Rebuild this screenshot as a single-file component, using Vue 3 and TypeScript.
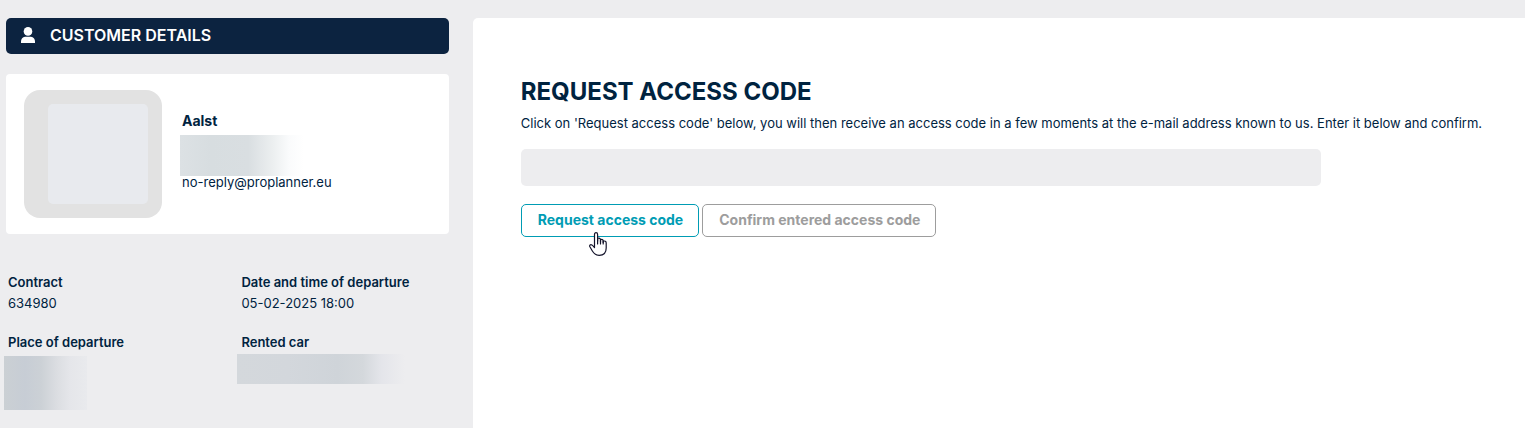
<script setup lang="ts">
import { ref } from 'vue'

interface Detail {
  label: string
  value?: string
  mask?: string
}

const accessCode = ref('')

const details: Detail[] = [
  { label: 'Contract', value: '634980' },
  { label: 'Date and time of departure', value: '05-02-2025 18:00' },
  { label: 'Place of departure', mask: 'mask-place' },
  { label: 'Rented car', mask: 'mask-car' },
]
</script>

<template>
  <div class="page">
    <aside class="sidebar">
      <h2 class="bar">
        <svg class="user" viewBox="0 0 14 16" aria-hidden="true">
          <ellipse cx="7" cy="4.400" rx="4.300" ry="4.400" />
          <path d="M0 16v-1.500C0 11.700 1.600 10 4 9.700h6c2.400.3 4 2 4 4.800V16z" />
        </svg>
        <span>CUSTOMER DETAILS</span>
      </h2>

      <section class="card">
        <div class="avatar"><div class="picture"></div></div>
        <div class="contact">
          <strong class="name">Aalst</strong>
          <div class="mask-address"></div>
          <span class="mail">no-reply@proplanner.eu</span>
        </div>
      </section>

      <dl class="details">
        <div v-for="item in details" :key="item.label" class="detail">
          <dt>{{ item.label }}</dt>
          <dd v-if="item.value">{{ item.value }}</dd>
          <dd v-else :class="item.mask"></dd>
        </div>
      </dl>
    </aside>

    <main class="content">
      <h1>REQUEST ACCESS CODE</h1>
      <label for="access-code">Click on 'Request access code' below, you will then receive an access code in a few moments at the e-mail address known to us. Enter it below and confirm.</label>
      <input id="access-code" v-model="accessCode" class="code" type="text" />
      <div class="actions">
        <button type="button" class="btn primary">
          Request access code
          <svg class="pointer" viewBox="0 0 18 24" aria-hidden="true">
            <path d="M5.500 14V2.500C5.500 1.300 6.200.7 7 .7s1.600.6 1.600 1.800V9V6.500c1.500-.6 2.900-.2 2.900 1.200V10 7.700c1.400-.6 2.700-.1 2.700 1.200v1.600-1.300c1.700-.5 3 .1 3 1.700V16c0 4.500-2.600 7.300-7 7.300-3.600 0-5.300-1.800-7-4.600L.9 14.800c-.8-1.500.6-2.700 2-1.900.9.500 1.700 1.600 2.600 2.600z" />
            <path d="M8.600 7v5M11.500 8v4M14.200 9v3" />
          </svg>
        </button>
        <button type="button" class="btn" disabled>Confirm entered access code</button>
      </div>
    </main>
  </div>
</template>

<style>
body {
  margin: 0;
  background: #ededef;
}
</style>

<style scoped>
.page {
  box-sizing: border-box;
  display: grid;
  grid-template-columns: 31% 1fr;
  min-height: 100vh;
  padding-top: 18px;
  background: #ededef;
  color: #00233f;
  font: 13px/20px Inter, "Open Sans", sans-serif;
}

.sidebar {
  padding: 0 24px 0 6px;
}

.bar {
  display: flex;
  align-items: center;
  gap: 15px;
  margin: 0 0 20px;
  padding: 8px 15px 10px;
  border-radius: 5px;
  background: #0c2340;
  color: #fff;
  font-size: 16px;
  font-weight: 600;
  line-height: 18px;
}

.user {
  width: 14px;
  height: 16px;
  fill: #fff;
}

.card {
  display: flex;
  align-items: flex-start;
  gap: 18px;
  padding: 16px 18px;
  border-radius: 4px;
  background: #fff;
}

.avatar {
  padding: 14px 14px 14px 24px;
  border-radius: 16px;
  background: #e2e2e2;
}

.picture {
  width: 100px;
  height: 100px;
  border-radius: 5px;
  background: #e8eaee;
}

.contact {
  display: flex;
  flex-direction: column;
  padding-top: 21px;
}

.name {
  padding: 0 2px;
  margin-bottom: 4px;
  font-size: 14px;
  font-weight: 700;
}

.mail {
  padding: 0 2px;
  line-height: 12px;
}

.mask-address {
  width: 124px;
  height: 41px;
  background: linear-gradient(90deg, #dce1e4, #d7dde0 25%, #d9dee1 55%, #eceff0 75%, #fafbfc 88%, #fff);
}

.details {
  display: grid;
  grid-template-columns: 1fr 1fr;
  column-gap: 26px;
  row-gap: 18px;
  margin: 38px 0 0;
  padding-left: 2px;
}

.detail {
  display: flex;
  flex-direction: column;
}

dt {
  line-height: 20px;
  font-weight: 600;
}

dd {
  margin: 0;
  line-height: 22px;
}

.mask-place {
  width: 83px;
  height: 54px;
  margin: 4px 0 0 -4px;
  background: linear-gradient(90deg, #cbd0d4, #c7cdd5 25%, #ccd1d6 45%, #dcdee2 65%, #e5e6ea 80%, #e9eaed);
}

.mask-car {
  width: 168px;
  height: 30px;
  margin: 2px 0 0 -4px;
  background: linear-gradient(90deg, #d4d8dc, #d3d7dc 30%, #cfd4d9 60%, #d4d8dc 75%, #e4e5ea 86%, #ededef);
}

.content {
  display: flex;
  flex-direction: column;
  align-items: flex-start;
  padding: 60px 16px 24px 48px;
  border-top-left-radius: 5px;
  background: #fff;
}

h1 {
  margin: 0 0 7px;
  font-size: 24px;
  font-weight: 700;
  line-height: 28px;
}

.code {
  box-sizing: border-box;
  width: 100%;
  max-width: 800px;
  height: 37px;
  margin: 16px 0 18px;
  padding: 0 12px;
  border: 0;
  border-radius: 5px;
  background: #ededef;
  color: inherit;
  font: inherit;
}

.actions {
  display: flex;
  gap: 3px;
}

.btn {
  position: relative;
  padding: 5px 15px 6px 16px;
  border: 1px solid #9d9d9d;
  border-radius: 5px;
  background: #fff;
  color: #9d9d9d;
  font: 700 14px/20px Inter, "Open Sans", sans-serif;
}

.primary {
  border-color: #009cb4;
  color: #009cb4;
  cursor: pointer;
}

.pointer {
  position: absolute;
  top: 27px;
  left: 67px;
  width: 18px;
  height: 24px;
  fill: #fff;
  stroke: #14142b;
  stroke-width: 1.2;
  stroke-linejoin: round;
  stroke-linecap: round;
}
</style>
